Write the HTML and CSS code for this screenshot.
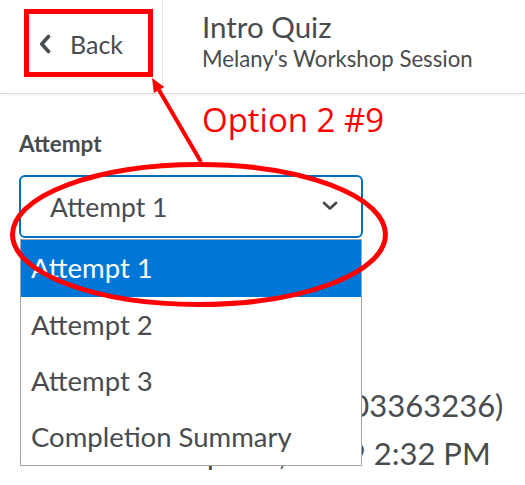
FILE: index.html
```html
<!DOCTYPE html>
<html lang="en">
<head>
<meta charset="utf-8">
<title>Intro Quiz</title>
<link rel="stylesheet" href="styles.css">
</head>
<body>
<header class="header">
  <div class="back-cell">
    <a class="back-btn" href="#">
      <svg class="back-icon" width="12" height="20" viewBox="0 0 12 20"><path d="M9.5 2.5 L2.8 10 L9.5 17.5" fill="none" stroke="#494c4e" stroke-width="3.6" stroke-linecap="round" stroke-linejoin="round"/></svg>
      <span>Back</span>
    </a>
  </div>
  <div class="title-cell">
    <div class="title">Intro Quiz</div>
    <div class="subtitle">Melany's Workshop Session</div>
  </div>
</header>
<main class="main">
  <div class="label">Attempt</div>
  <div class="select">
    <span class="select-text">Attempt 1</span>
    <svg class="select-icon" width="18" height="12" viewBox="0 0 18 12"><path d="M3 3 L9 8.5 L15 3" fill="none" stroke="#494c4e" stroke-width="2.8" stroke-linecap="round" stroke-linejoin="round"/></svg>
  </div>
  <div class="info-line info-first">Name: Melany Student (03363236)</div>
  <div class="info-line">Submitted: Sept 10, 2019 2:32 PM</div>
  <ul class="listbox">
    <li class="option selected">Attempt 1</li>
    <li class="option">Attempt 2</li>
    <li class="option">Attempt 3</li>
    <li class="option">Completion Summary</li>
  </ul>
</main>
<svg class="annot" width="525" height="485" viewBox="0 0 525 485">
  <rect x="26.5" y="11.5" width="124" height="63" fill="none" stroke="#ff0000" stroke-width="5"/>
  <line x1="201" y1="162" x2="159" y2="90" stroke="#ff0000" stroke-width="4"/>
  <polygon points="152,78 164.3,87.1 153.9,93.1" fill="#ff0000"/>
  <ellipse cx="199" cy="234.5" rx="186.5" ry="70" fill="none" stroke="#ff0000" stroke-width="5"/>
</svg>
<div class="annot-text">Option 2 #9</div>
</body>
</html>
```

FILE: styles.css
```css
* { box-sizing: border-box; }
html, body { margin: 0; padding: 0; background: #fff; }
body {
  width: 525px;
  height: 485px;
  overflow: hidden;
  position: relative;
  font-family: Lato, "Open Sans", sans-serif;
  color: #494c4e;
}
.header {
  display: flex;
  height: 94px;
  border-bottom: 1px solid #d6dbe2;
  box-shadow: 0 2px 2px rgba(0,0,0,0.04);
}
.back-cell {
  width: 163px;
  border-right: 1px solid #e3e8ee;
  padding: 30px 0 0 39px;
}
.back-btn {
  display: flex;
  align-items: center;
  gap: 19px;
  color: #494c4e;
  text-decoration: none;
  font-size: 25px;
  line-height: 28px;
}
.back-icon { display: block; }
.title-cell {
  padding: 10px 0 0 39px;
}
.title {
  font-size: 29.5px;
  line-height: 33px;
}
.subtitle {
  margin-top: 3px;
  font-size: 22.2px;
  line-height: 26px;
}
.main {
  padding: 37px 0 0 19px;
  position: relative;
}
.label {
  font-weight: 700;
  font-size: 22.5px;
  line-height: 26px;
}
.select {
  margin-top: 18px;
  width: 344px;
  height: 63px;
  border: 2px solid #006fbf;
  border-radius: 6px;
  display: flex;
  align-items: center;
  justify-content: space-between;
  padding: 0 22px 0 29px;
}
.select-text {
  font-size: 26.5px;
  line-height: 30px;
}
.select-icon { display: block; margin-top: -2px; }
.info-line {
  font-size: 31px;
  line-height: 48px;
  white-space: nowrap;
}
.info-first { margin-top: 143px; padding-left: 6px; }
.listbox {
  position: absolute;
  left: 20px;
  top: 145px;
  width: 342px;
  margin: 0;
  padding: 0;
  list-style: none;
  background: #fff;
  border: 1px solid #a5a5a5;
}
.option {
  height: 56px;
  line-height: 56px;
  font-size: 27.5px;
  padding-left: 10px;
  color: #494c4e;
}
.option.selected {
  height: 57px;
  background: #0077d6;
  color: #fff;
}
.annot {
  position: absolute;
  left: 0;
  top: 0;
  pointer-events: none;
}
.annot-text {
  position: absolute;
  left: 202px;
  top: 98px;
  font-family: "Open Sans", sans-serif;
  font-size: 33px;
  line-height: 44px;
  color: #ff0000;
}
```
